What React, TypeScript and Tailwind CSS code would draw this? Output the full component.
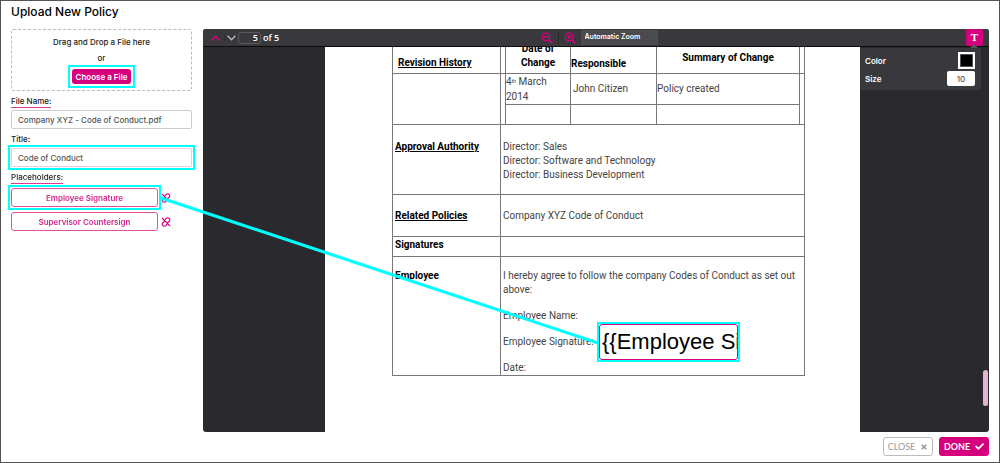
import { useState } from "react";
import type { ReactNode } from "react";
import { FaCheck, FaTimes } from "react-icons/fa";

const placeholders = [
  { name: "Employee Signature", highlighted: true },
  { name: "Supervisor Countersign", highlighted: false },
];

const directors = ["Sales", "Software and Technology", "Business Development"];

const FieldLabel = ({ htmlFor, children }: { htmlFor?: string; children: ReactNode }) => (
  <label
    htmlFor={htmlFor}
    className="w-fit border-b border-[#e0389a] text-[8px] leading-[11px] font-medium text-[#222]"
  >
    {children}
  </label>
);

const ZoomIcon = ({ plus }: { plus?: boolean }) => (
  <svg viewBox="0 0 12 12" className="size-3" fill="none" stroke="#d6007e" strokeWidth="1.3">
    <circle cx="5" cy="5" r="3.8" />
    <path d="M8 8l3.2 3.2" strokeWidth="1.7" />
    <path d={plus ? "M3 5h4M5 3v4" : "M3 5h4"} />
  </svg>
);

const UnlinkIcon = () => (
  <svg
    viewBox="0 0 24 24"
    className="size-[10px]"
    fill="none"
    stroke="#d6007e"
    strokeWidth="2.8"
    strokeLinecap="round"
  >
    <path d="M10 6l2-2a4.8 4.8 0 0 1 8 0c1.4 2 1 4.6-.6 6.2L16 13.5" />
    <path d="M14 18l-2 2a4.8 4.8 0 0 1-8 0c-1.4-2-1-4.6.6-6.2L8 10.5" />
    <path d="M3 3l18 18" />
  </svg>
);

const Toolbar = () => (
  <div className="flex h-[18px] shrink-0 items-center border-b border-[#0c0c0d] bg-[#38383d] pl-2 text-white">
    <div className="flex flex-1 items-center">
      <button type="button" aria-label="Previous page" className="border-r border-[#2a2a2e] pr-1">
        <svg viewBox="0 0 9 6" className="h-[6px] w-[9px]" fill="none" stroke="#d6007e" strokeWidth="1.3">
          <path d="M0.6 5.2L4.5 1.2L8.4 5.2" />
        </svg>
      </button>
      <button type="button" aria-label="Next page" className="pl-[2px]">
        <svg viewBox="0 0 9 6" className="h-[6px] w-[9px]" fill="none" stroke="#b5b5b8" strokeWidth="1.5">
          <path d="M0.6 0.8L4.5 4.8L8.4 0.8" />
        </svg>
      </button>
      <input
        aria-label="Page"
        defaultValue="5"
        className="ml-[2px] h-3 w-[23px] rounded-[3px] border border-[#5a5a5e] bg-[#38383d] pr-[2px] text-right font-['Open_Sans'] text-[9px] font-semibold"
      />
      <span className="ml-[2px] font-['Open_Sans'] text-[9px] leading-3 font-semibold">of 5</span>
    </div>
    <div className="flex items-center pl-1">
      <button type="button" aria-label="Zoom out" className="border-r border-[#2a2a2e] pr-[5px]">
        <ZoomIcon />
      </button>
      <button type="button" aria-label="Zoom in" className="pr-[5px] pl-[5px]">
        <ZoomIcon plus />
      </button>
      <select
        aria-label="Zoom"
        className="h-[15px] w-[77px] appearance-none bg-[#4a4a4f] pl-1 text-[7px] font-semibold"
      >
        <option>Automatic Zoom</option>
      </select>
    </div>
    <div className="flex flex-1 justify-end pr-[6px]">
      <button
        type="button"
        aria-label="Text"
        className="h-[17px] w-[17px] rounded-[2px] bg-[#d6007e] font-['Liberation_Serif'] text-[11px] leading-[17px] font-bold"
      >
        T
      </button>
    </div>
  </div>
);

const TextOptions = () => (
  <div className="absolute top-[1px] right-[8px] flex h-[42px] w-[121px] flex-col justify-center gap-[2px] rounded-[2px] bg-[#38383d] pr-[6px] pl-[5px] text-[8px] font-semibold text-white">
    <svg viewBox="0 0 8 4" className="absolute -top-[4px] right-[3px] h-1 w-2">
      <path d="M0 4L4 0L8 4Z" fill="#55555a" />
    </svg>
    <div className="flex items-center justify-between">
      <label htmlFor="color">Color</label>
      <input
        id="color"
        type="color"
        defaultValue="#000000"
        className="h-[17px] w-[17px] appearance-none border-2 border-white bg-[#555] p-px [&::-webkit-color-swatch]:border-0 [&::-webkit-color-swatch-wrapper]:p-0"
      />
    </div>
    <div className="flex items-center justify-between">
      <label htmlFor="size">Size</label>
      <input
        id="size"
        defaultValue="10"
        className="h-[15px] w-7 rounded-[2px] bg-white text-center font-medium text-[#555]"
      />
    </div>
  </div>
);

const PolicyPage = () => {
  const [signature, setSignature] = useState("{{Employee Signature}}");

  return (
    <div className="flex w-[535px] flex-col justify-end overflow-hidden bg-white pb-14 pl-[67px] text-[#444]">
      <table className="w-[413px] shrink-0 table-fixed border-collapse font-[Roboto] text-[10px] leading-[14px] [&_td]:border [&_td]:border-[#777] [&_th]:border [&_th]:border-[#777] [&_th]:font-bold [&_th]:text-black">
        <colgroup>
          <col className="w-[108px]" />
          <col className="w-[5px]" />
          <col className="w-[65px]" />
          <col className="w-[86px]" />
          <col className="w-[143px]" />
          <col />
        </colgroup>
        <tbody>
          <tr className="h-9">
            <th className="pb-[3px] pl-[5px] text-left align-bottom underline">Revision History</th>
            <td />
            <th className="pb-[3px] align-bottom">Date of<br />Change</th>
            <th className="pb-[2px] text-left align-bottom">Responsible</th>
            <th className="pb-2 align-bottom">Summary of Change</th>
            <td />
          </tr>
          <tr className="h-[31px]">
            <td rowSpan={2} />
            <td rowSpan={2} />
            <td className="leading-[15px]">
              4<sup className="text-[5px]">th</sup> March
              <br />
              2014
            </td>
            <td className="pl-[2px]">John Citizen</td>
            <td>Policy created</td>
            <td rowSpan={2} />
          </tr>
          <tr className="h-5">
            <td />
            <td />
            <td />
          </tr>
          <tr className="h-[70px]">
            <th className="pt-[15px] pl-[2px] text-left align-top underline">Approval Authority</th>
            <td colSpan={5} className="pt-[15px] pl-[2px] align-top">
              {directors.map((director) => (
                <p key={director}>Director: {director}</p>
              ))}
            </td>
          </tr>
          <tr className="h-[42px]">
            <th className="pl-[2px] text-left underline">Related Policies</th>
            <td colSpan={5} className="pl-[2px]">Company XYZ Code of Conduct</td>
          </tr>
          <tr className="h-5">
            <th className="pb-1 pl-[2px] text-left">Signatures</th>
            <td colSpan={5} />
          </tr>
          <tr className="h-[119px]">
            <th className="pt-3 pl-[2px] text-left align-top">Employee</th>
            <td colSpan={5} className="pt-3 pl-[2px] align-top">
              <p>I hereby agree to follow the company Codes of Conduct as set out above:</p>
              <p className="mt-3">Employee Name:</p>
              <div className="relative mt-3">
                <label htmlFor="signature">Employee Signature:</label>
                <div className="absolute top-1/2 left-[96px] -translate-y-1/2 outline-2 outline-[#00ffff]">
                  <input
                    id="signature"
                    value={signature}
                    onChange={(e) => setSignature(e.target.value)}
                    className="block h-9 w-[139px] rounded-[3px] border border-[#d6007e] bg-white pl-[2px] font-['Liberation_Sans'] text-[22px] text-black"
                  />
                </div>
              </div>
              <p className="mt-3">Date:</p>
            </td>
          </tr>
        </tbody>
      </table>
    </div>
  );
};

const App = () => {
  const [title, setTitle] = useState("Code of Conduct");

  return (
    <div className="relative flex h-screen flex-col border border-[#555] bg-white px-[10px] pb-[6px] font-[Inter] text-[8px] text-[#222]">
      <h1 className="h-7 shrink-0 pt-[3px] text-[12px] leading-4 font-medium text-black">
        Upload New Policy
      </h1>

      <main className="flex min-h-0 flex-1 gap-[11px]">
        <form className="flex w-[181px] flex-col">
          <div className="flex h-[62px] flex-col items-center rounded-[2px] border border-dashed border-[#bbb] pt-[6px] leading-[12px] font-medium">
            <p>Drag and Drop a File here</p>
            <p className="mt-1">or</p>
            <div className="mt-[5px] outline-2 outline-offset-2 outline-[#00ffff]">
              <button
                type="button"
                className="block h-[15px] w-[59px] rounded-[3px] bg-[#d6007e] font-semibold text-white"
              >
                Choose a File
              </button>
            </div>
          </div>

          <div className="mt-[5px] flex flex-col gap-[2px]">
            <FieldLabel htmlFor="file-name">File Name:</FieldLabel>
            <input
              id="file-name"
              defaultValue="Company XYZ - Code of Conduct.pdf"
              className="h-[19px] rounded-[2px] border border-[#ccc] px-[6px] font-medium text-[#555]"
            />
          </div>
          <div className="mt-[5px] flex flex-col gap-[2px]">
            <FieldLabel htmlFor="title">Title:</FieldLabel>
            <div className="outline-2 outline-offset-1 outline-[#00ffff]">
              <input
                id="title"
                autoFocus
                value={title}
                onChange={(e) => setTitle(e.target.value)}
                className="block h-[19px] w-full rounded-[2px] border border-[#f3c4e0] px-[6px] font-medium text-[#555] outline-none"
              />
            </div>
          </div>
          <div className="mt-[5px] flex flex-col">
            <FieldLabel>Placeholders:</FieldLabel>
            <ul className="mt-1 flex flex-col gap-[5px]">
              {placeholders.map((item) => (
                <li key={item.name} className="flex items-center gap-[3px]">
                  <div className={item.highlighted ? "outline-2 outline-offset-1 outline-[#00ffff]" : ""}>
                    <button
                      type="button"
                      className="block h-[19px] w-[147px] rounded-[3px] border border-[#e0529f] font-semibold text-[#d6268c]"
                    >
                      {item.name}
                    </button>
                  </div>
                  <button type="button" aria-label={`Unlink ${item.name}`}>
                    <UnlinkIcon />
                  </button>
                </li>
              ))}
            </ul>
          </div>
        </form>

        <section className="flex flex-1 flex-col overflow-hidden rounded-[3px] bg-[#2a2a2e]">
          <Toolbar />
          <div className="relative flex min-h-0 flex-1">
            <div className="flex flex-1 justify-center">
              <PolicyPage />
            </div>
            <div className="flex w-[7px] flex-col justify-end pr-px pb-[26px] pl-px">
              <div className="h-9 rounded-full bg-[#e3b4d1]" />
            </div>
            <TextOptions />
          </div>
        </section>
      </main>

      <footer className="mt-[5px] flex shrink-0 justify-end gap-[6px]">
        <button
          type="button"
          className="flex h-[19px] w-[50px] items-center justify-center gap-[5px] rounded-[3px] border border-[#bbb] font-[Lato] text-[9px] text-[#999]"
        >
          CLOSE <FaTimes size={8} />
        </button>
        <button
          type="button"
          className="flex h-[19px] w-[50px] items-center justify-center gap-[5px] rounded-[3px] bg-[#d6007e] font-[Lato] text-[9px] font-bold text-white"
        >
          DONE <FaCheck size={9} />
        </button>
      </footer>

      {/* connector between the placeholder and its field on the page */}
      <svg className="pointer-events-none absolute inset-0 h-full w-full">
        <line x1="160" y1="197" x2="597" y2="342" stroke="#00ffff" strokeWidth="3" />
      </svg>
    </div>
  );
};

export default App;
